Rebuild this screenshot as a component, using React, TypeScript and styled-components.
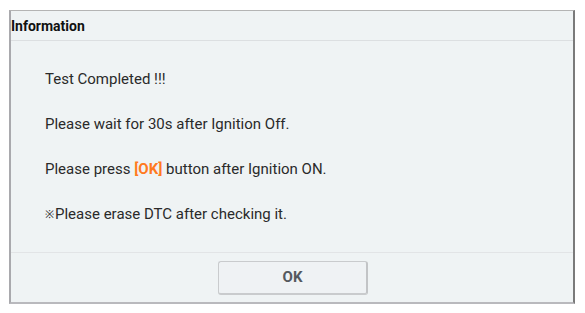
import React from "react";
import styled, { createGlobalStyle } from "styled-components";

const Global = createGlobalStyle`
  html, body { margin: 0; padding: 0; background: #ffffff; }
  body { font-family: Roboto, "Liberation Sans", sans-serif; }
`;

const Dialog = styled.div`
  box-sizing: border-box;
  margin: 10px 0 0 9px;
  width: 566px;
  height: 294px;
  background: #eff3f4;
  border-top: 1px solid #b4b4b4;
  border-left: 2px solid #a9a9ad;
  border-right: 2px solid #7a7a7a;
  border-bottom: 2px solid #b9b9bd;
  display: flex;
  flex-direction: column;
`;

const Header = styled.div`
  height: 30px;
  box-sizing: border-box;
  border-bottom: 1px solid #dcdfe1;
  display: flex;
  align-items: center;
  padding: 1px 0 0 0;
  font-weight: 700;
  font-size: 14px;
  color: #111;
`;

const Body = styled.div`
  flex: 1;
  padding: 29px 0 0 34px;
  display: flex;
  flex-direction: column;
  gap: 27px;
`;

const Line = styled.div`
  font-size: 15px;
  line-height: 18px;
  color: #2a2a2a;
`;

const Accent = styled.span`
  color: #ff7a1f;
  font-weight: 700;
`;

const Mark = styled.span`
  font-size: 11px;
  vertical-align: 1px;
  margin-right: 1px;
`;

const Footer = styled.div`
  height: 50px;
  box-sizing: border-box;
  border-top: 1px solid #e2e4e6;
  display: flex;
  align-items: center;
  justify-content: center;
  padding-left: 2px;
`;

const Button = styled.button`
  width: 150px;
  height: 34px;
  box-sizing: border-box;
  background: #eff2f4;
  border: 1px solid #c9cbcd;
  border-right: 2px solid #c2c4c6;
  border-bottom: 2px solid #c9cbcd;
  border-radius: 3px;
  font-family: Roboto, "Liberation Sans", sans-serif;
  font-weight: 700;
  font-size: 15px;
  color: #55595e;
`;

export default function App() {
  return (
    <>
      <Global />
      <Dialog>
        <Header>Information</Header>
        <Body>
          <Line>Test Completed !!!</Line>
          <Line>Please wait for 30s after Ignition Off.</Line>
          <Line>
            Please press <Accent>[OK]</Accent> button after Ignition ON.
          </Line>
          <Line>
            <Mark>※</Mark>Please erase DTC after checking it.
          </Line>
        </Body>
        <Footer>
          <Button>OK</Button>
        </Footer>
      </Dialog>
    </>
  );
}
